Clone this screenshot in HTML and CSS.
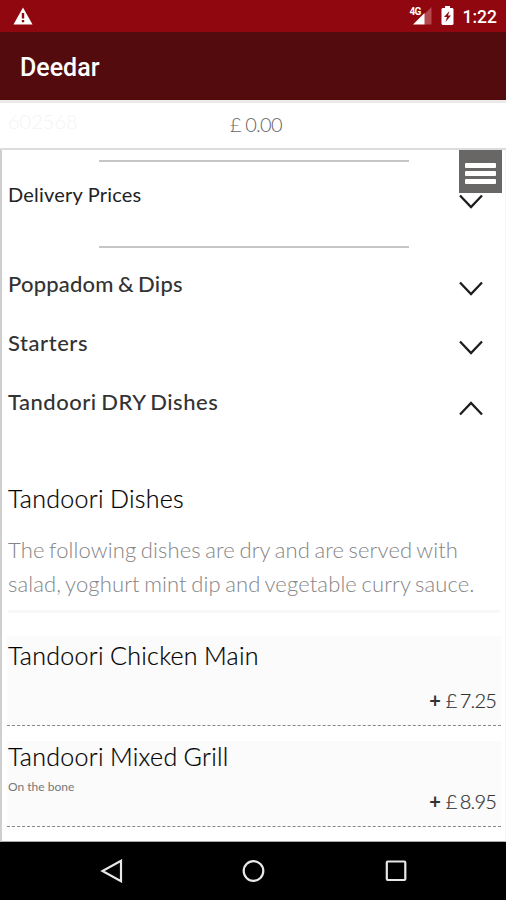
FILE: index.html
```html
<!DOCTYPE html>
<html lang="en">
<head>
<meta charset="utf-8">
<title>Deedar</title>
<link rel="stylesheet" href="styles.css">
</head>
<body>
<div class="phone">
  <div class="status">
    <svg class="warning" width="20" height="18" viewBox="0 0 20 18"><path fill="#fff" d="M10 .5 19.500 17.500H.5z"/><path fill="#900710" d="M8.800 6h2.400v5.500H8.800zM8.800 13h2.400v2.200H8.800z"/></svg>
    <div class="indicators">
      <div class="signal"><span class="network">4G</span><svg width="19" height="18" viewBox="0 0 19 18"><path fill="#b5484f" d="M18.500 0v17.500H11V7.500z"/><path fill="#fff" d="M0 17.500 11.500 6v11.500z"/></svg></div>
      <svg class="battery" width="13" height="19" viewBox="0 0 13 19"><path fill="#fff" d="M4 0h5v2h2.500l1 1v15l-1 1h-10l-1-1V3l1-1H4z"/><path fill="#900710" d="M8.500 5 3 11h3l-1.500 5L10 9.500H7z"/></svg>
      <span class="clock">1:22</span>
    </div>
  </div>
  <header class="appbar">Deedar</header>
  <div class="cart"><span class="code">602568</span><span class="total">£ 0.00</span></div>
  <main class="menu">
    <button class="burger"><i></i><i></i><i></i></button>
    <section class="delivery">
      <h2>Delivery Prices</h2>
      <svg class="chevron" width="24" height="15" viewBox="0 0 24 15"><path d="M1 1.500 12 13 23 1.500"/></svg>
    </section>
    <section class="category"><h2>Poppadom &amp; Dips</h2><svg class="chevron" width="24" height="15" viewBox="0 0 24 15"><path d="M1 1.500 12 13 23 1.500"/></svg></section>
    <section class="category starters"><h2>Starters</h2><svg class="chevron" width="24" height="15" viewBox="0 0 24 15"><path d="M1 1.500 12 13 23 1.500"/></svg></section>
    <section class="category open"><h2>Tandoori DRY Dishes</h2><svg class="chevron" width="24" height="15" viewBox="0 0 24 15"><path d="M1 13.500 12 2 23 13.500"/></svg></section>
    <section class="intro">
      <h3>Tandoori Dishes</h3>
      <p>The following dishes are dry and are served with<br>salad, yoghurt mint dip and vegetable curry sauce.</p>
    </section>
    <article class="dish first"><h3>Tandoori Chicken Main</h3><div class="price"><b>+</b><span>£ 7.25</span></div></article>
    <article class="dish"><h3>Tandoori Mixed Grill</h3><small>On the bone</small><div class="price"><b>+</b><span>£ 8.95</span></div></article>
  </main>
  <nav class="softkeys">
    <svg width="24" height="24" viewBox="0 0 24 24"><path d="M21 1.800v20.400L2.500 12z"/></svg>
    <svg width="24" height="24" viewBox="0 0 24 24"><circle cx="11.500" cy="12" r="9.800"/></svg>
    <svg width="24" height="24" viewBox="0 0 24 24"><rect x="2.800" y="2.500" width="18.500" height="18.500" rx="1"/></svg>
  </nav>
</div>
</body>
</html>
```
FILE: styles.css
```css
* { box-sizing: border-box; }
body { margin: 0; background: #fff; }
h2, h3, p { margin: 0; font-weight: 400; }
.phone { width: 506px; height: 900px; display: flex; flex-direction: column; overflow: hidden; font-family: Lato, sans-serif; color: #222; }
.status { height: 32px; background: #900710; display: flex; justify-content: space-between; padding: 7px 9px 0 13px; font-family: Roboto, sans-serif; color: #fff; }
.indicators { display: flex; align-items: flex-start; }
.signal { display: flex; position: relative; width: 26px; justify-content: flex-end; margin-right: 7px; }
.network { position: absolute; left: 4px; top: 0; font-size: 10px; line-height: 10px; font-weight: 700; letter-spacing: -.8px; }
.battery { margin: -1px 9px 0 2px; }
.clock { font-size: 17.500px; line-height: 20px; font-weight: 500; }
.appbar { height: 68px; flex: none; background: #540b0d; color: #fff; font: 500 25px/71px Roboto, sans-serif; padding-left: 20px; }
.cart { height: 50px; flex: none; border-top: 3px solid #ece9e9; border-bottom: 2px solid #dcdcdc; display: grid; grid-template-columns: 222px 1fr; padding-left: 8px; font-size: 20px; }
.code { color: #f4f4f4; line-height: 37px; font-size: 20px; font-weight: 300; }
.total { color: #666; font-weight: 300; line-height: 43px; word-spacing: -.5px; letter-spacing: -.7px; }
.menu { position: relative; height: 692px; border-left: 2px solid #cfcfcf; border-right: 1px solid #f5f5f5; border-bottom: 1px solid #aaa; padding: 10px 5px 0 6px; }
.burger { position: absolute; right: 3px; top: 0; width: 43px; height: 43px; border: 0; padding: 4px 0 0; background: #696766; display: flex; flex-direction: column; align-items: center; justify-content: center; gap: 3px; }
.burger i { width: 31px; height: 5px; border-radius: 1px; background: #fff; }
.delivery, .category { display: flex; justify-content: space-between; padding-right: 17px; }
.delivery { height: 88px; padding-top: 22px; background: linear-gradient(#c6c6c6, #c6c6c6) 91px 0 / 310px 2px no-repeat, linear-gradient(#c6c6c6, #c6c6c6) 91px 86px / 310px 2px no-repeat; }
.delivery h2 { font-size: 20px; line-height: 24px; letter-spacing: .2px; }
.delivery .chevron { margin-top: 12px; }
.category { height: 59px; padding-top: 22px; }
.category h2 { font-size: 22px; line-height: 28px; font-weight: 500; color: #333; word-spacing: -1.500px; letter-spacing: .2px; }
.category.starters h2 { letter-spacing: .55px; }
.category.open h2 { letter-spacing: .5px; }
.category .chevron { margin-top: 11px; }
.category.open .chevron { margin-top: 13px; }
.chevron { fill: none; stroke: #1d1d1d; stroke-width: 2.300; margin-right: .5px; }
.intro { height: 188px; padding-top: 59px; border-bottom: 3px solid #f8f8f8; }
h3 { font-size: 25px; line-height: 29px; font-weight: 300; color: #000; letter-spacing: .3px; word-spacing: -1px; -webkit-text-stroke: .2px #000; }
.intro p { font-size: 22px; line-height: 34px; font-weight: 300; color: #858585; padding-top: 20px; white-space: nowrap; word-spacing: -1.600px; letter-spacing: .12px; }
.dish { height: 86px; margin: 15px -1px 0; padding: 1px 5px 0 1px; background: #fbfbfb; border-bottom: 1px dashed #888; display: grid; grid-template-rows: 30px 18px 1fr; }
.dish.first { height: 90px; margin-top: 23px; padding-top: 5px; }
.dish small { font-size: 12px; line-height: 30px; color: #777; }
.dish .price { grid-row: 3; display: flex; justify-content: flex-end; gap: 5px; font-size: 20px; line-height: 22px; color: #333; }
.price span { font-weight: 300; word-spacing: -1.500px; letter-spacing: -.8px; -webkit-text-stroke: .2px #333; }
.softkeys { flex: 1; background: #000; display: flex; justify-content: space-between; padding: 17px 98px 0 100px; }
.softkeys svg { fill: none; stroke: #e8e8e8; stroke-width: 2.200; }
```
